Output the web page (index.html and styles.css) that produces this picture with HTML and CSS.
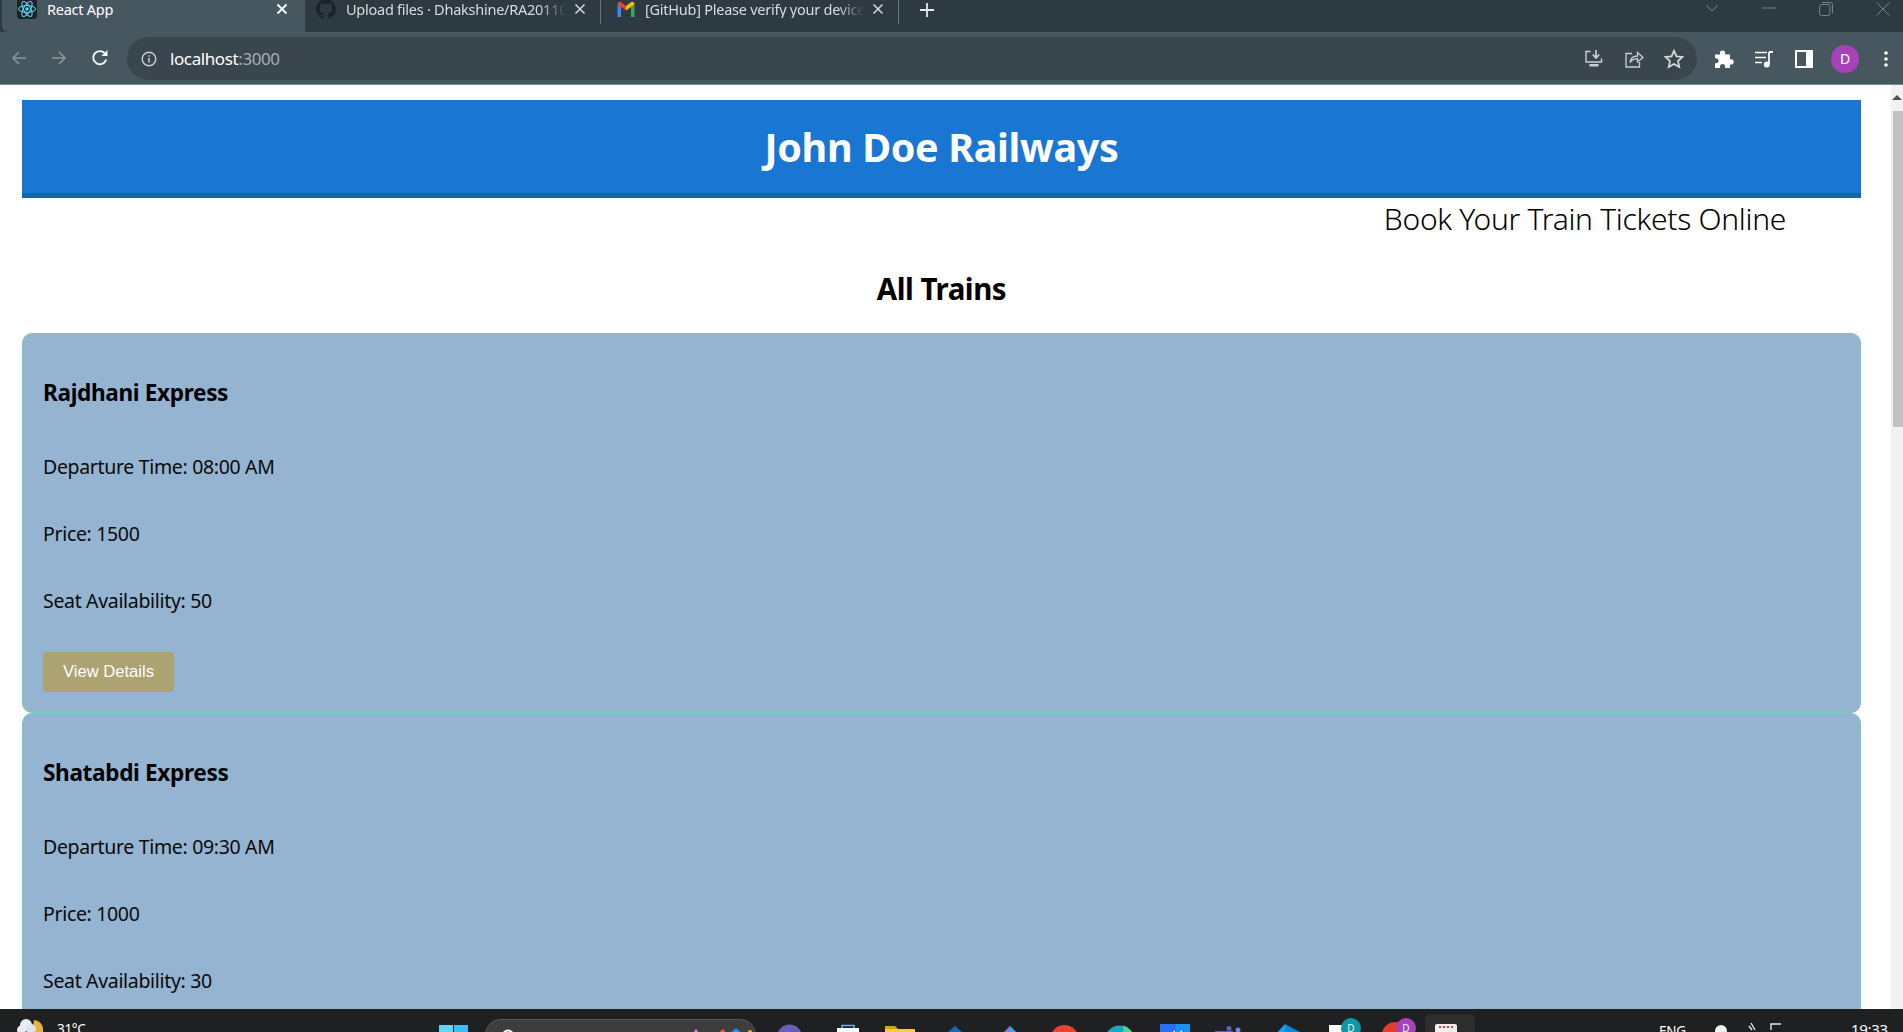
FILE: index.html
```html
<!DOCTYPE html>
<html lang="en">
<head>
<meta charset="utf-8">
<title>React App</title>
<link rel="stylesheet" href="styles.css">
</head>
<body>
<div class="shell">
  <div class="tabstrip">
    <div class="tab tab-active">
      <svg class="favicon" viewBox="0 0 20 20"><rect width="20" height="20" rx="3" fill="#20232a"/><g fill="none" stroke="#61dafb" stroke-width="1"><ellipse cx="10" cy="10" rx="8.5" ry="3.4"/><ellipse cx="10" cy="10" rx="8.5" ry="3.4" transform="rotate(60 10 10)"/><ellipse cx="10" cy="10" rx="8.5" ry="3.4" transform="rotate(120 10 10)"/></g><circle cx="10" cy="10" r="1.7" fill="#61dafb"/></svg>
      <span class="tab-title">React App</span>
      <svg class="tab-close" viewBox="0 0 12 12"><path d="M1.5 1.5l9 9M10.5 1.5l-9 9" stroke="#fff" stroke-width="1.8"/></svg>
    </div>
    <div class="tab tab-two">
      <svg class="favicon-gh" viewBox="0 0 16 16"><path fill="#1b2227" d="M8 0a8 8 0 0 0-2.5 15.6c.4.1.5-.2.5-.4v-1.4c-2.2.5-2.7-1-2.7-1-.4-.9-.9-1.200-.9-1.200-.7-.5.1-.5.1-.5.8.1 1.200.8 1.200.8.7 1.200 1.900.9 2.300.7.1-.5.3-.9.5-1.100-1.800-.2-3.600-.9-3.600-4 0-.9.3-1.600.8-2.100-.1-.2-.4-1 .1-2.100 0 0 .7-.2 2.200.8a7.600 7.600 0 0 1 4 0c1.500-1 2.200-.8 2.200-.8.4 1.100.2 1.900.1 2.100.5.6.8 1.300.8 2.100 0 3.100-1.900 3.700-3.700 3.900.3.300.6.800.6 1.500v2.200c0 .2.100.5.500.4A8 8 0 0 0 8 0z"/></svg>
      <span class="tab-title tab-title-dim">Upload files · Dhakshine/RA2011026010022</span>
      <svg class="tab-close" viewBox="0 0 12 12"><path d="M1.500 1.500l9 9M10.500 1.500l-9 9" stroke="#d5dadd" stroke-width="1.500"/></svg>
    </div>
    <div class="tab-sep"></div>
    <div class="tab tab-three">
      <svg class="favicon-gm" viewBox="0 0 20 16"><path d="M1.500 16V3.500L5 6v10z" fill="#4285f4"/><path d="M15 16V6l3.500-2.500V16z" fill="#34a853"/><path d="M1.500 3.500 C1.500 1 3.700 .2 5 1.200L10 5v4.500L1.500 3.500z" fill="#ea4335"/><path d="M10 5l5-3.800c1.600-1 3.500 0 3.500 2.300L15 6l-5 3.500z" fill="#fbbc04"/></svg>
      <span class="tab-title tab-title-dim">[GitHub] Please verify your device</span>
      <svg class="tab-close" viewBox="0 0 12 12"><path d="M1.500 1.500l9 9M10.500 1.500l-9 9" stroke="#d5dadd" stroke-width="1.500"/></svg>
    </div>
    <div class="tab-sep"></div>
    <svg class="new-tab" viewBox="0 0 14 14"><path d="M7 0v14M0 7h14" stroke="#e6e9eb" stroke-width="1.800"/></svg>
    <div class="window-controls">
      <svg class="win-chevron" viewBox="0 0 14 8"><path d="M1 1l6 6 6-6" fill="none" stroke="#77838a" stroke-width="1"/></svg>
      <svg class="win-min" viewBox="0 0 14 2"><path d="M0 1h14" stroke="#77838a" stroke-width="1"/></svg>
      <svg class="win-max" viewBox="0 0 14 14"><rect x=".5" y="2.500" width="10.500" height="11" rx="2" fill="none" stroke="#77838a"/><path d="M3 .5h8.500a2 2 0 0 1 2 2V11" fill="none" stroke="#77838a"/></svg>
      <svg class="win-close" viewBox="0 0 14 14"><path d="M.5.5l13 13M13.500.5l-13 13" stroke="#77838a" stroke-width="1"/></svg>
    </div>
  </div>

  <div class="toolbar">
    <svg class="nav-back" viewBox="0 0 16 16"><path d="M15 8H2M8 2L2 8l6 6" fill="none" stroke="#8a969c" stroke-width="1.600"/></svg>
    <svg class="nav-forward" viewBox="0 0 16 16"><path d="M1 8h13M8 2l6 6-6 6" fill="none" stroke="#8a969c" stroke-width="1.600"/></svg>
    <svg class="nav-reload" viewBox="0 0 18 18"><path d="M15.200 10.500A6.600 6.600 0 1 1 13.500 4" fill="none" stroke="#f4f6f7" stroke-width="1.900"/><path d="M16.500 1v6h-6z" fill="#f4f6f7"/></svg>
    <div class="omnibox">
      <svg class="omni-info" viewBox="0 0 16 16"><circle cx="8" cy="8" r="6.800" fill="none" stroke="#c9cfd2" stroke-width="1.400"/><path d="M8 7v4.500M8 4.200v1.500" stroke="#c9cfd2" stroke-width="1.500"/></svg>
      <span class="omni-url"><span class="omni-host">localhost</span>:3000</span>
      <div class="omni-actions">
        <svg class="omni-icon" viewBox="0 0 20 20"><path d="M6.500 2.500H2v10.500h15.500V9.500" fill="none" stroke="#c9cfd2" stroke-width="1.400"/><path d="M12 1v7M8.800 5.500L12 9l3.200-3.500" fill="none" stroke="#c9cfd2" stroke-width="1.700"/><path d="M5.500 15h9v2.500h-9z" fill="#c9cfd2"/></svg>
        <svg class="omni-icon" viewBox="0 0 20 20"><path d="M8 4.500H2V18h13.500v-5" fill="none" stroke="#c9cfd2" stroke-width="1.300"/><path d="M6 13.500c.5-4 3.500-6.500 7.500-6.500V3.500L19 8.500 13.500 13v-3.300c-3 0-5.500 1-7.500 3.800z" fill="none" stroke="#c9cfd2" stroke-width="1.300"/></svg>
        <svg class="omni-icon" viewBox="0 0 20 20"><path d="M10 1.800l2.500 5.600 6 .6-4.500 4.100 1.300 6L10 15l-5.300 3.100 1.300-6L1.500 8l6-.6z" fill="none" stroke="#d5dadd" stroke-width="1.700"/></svg>
      </div>
    </div>
    <div class="toolbar-actions">
      <svg class="tool-icon" viewBox="0 0 20 20"><path d="M1 5.500h5V4a2.600 2.600 0 0 1 5.200 0v1.500h4.800v4.700h1a2.700 2.700 0 0 1 0 5.400h-1V19H11v-1.600a2.500 2.500 0 0 0-5 0V19H1v-4.800h1.200a2.500 2.500 0 0 0 0-5H1z" fill="#fff"/></svg>
      <svg class="tool-icon" viewBox="0 0 20 20"><path d="M1 3.500h12M1 8.500h11M1 13.500h7" stroke="#fff" stroke-width="1.700"/><path d="M15 3v12" stroke="#fff" stroke-width="1.700"/><path d="M15 3h4" stroke="#fff" stroke-width="2"/><circle cx="12.800" cy="15.500" r="3" fill="#fff"/></svg>
      <svg class="tool-icon" viewBox="0 0 20 20"><path d="M1 1h18v18H1z" fill="#fff"/><path d="M3 3h9v14H3z" fill="#47575f"/></svg>
      <div class="avatar">D</div>
      <svg class="tool-menu" viewBox="0 0 4 16"><circle cx="2" cy="2" r="1.800" fill="#fff"/><circle cx="2" cy="8" r="1.800" fill="#fff"/><circle cx="2" cy="14" r="1.800" fill="#fff"/></svg>
    </div>
  </div>

  <div class="viewport">
    <main class="page">
      <header class="banner"><h1 class="banner-title">John Doe Railways</h1></header>
      <p class="tagline">Book Your Train Tickets Online</p>
      <h2 class="section-title">All Trains</h2>

      <article class="card">
        <h3 class="card-title">Rajdhani Express</h3>
        <p class="card-line">Departure Time: 08:00 AM</p>
        <p class="card-line">Price: 1500</p>
        <p class="card-line">Seat Availability: 50</p>
        <button class="card-button">View Details</button>
      </article>
      <article class="card">
        <h3 class="card-title">Shatabdi Express</h3>
        <p class="card-line">Departure Time: 09:30 AM</p>
        <p class="card-line">Price: 1000</p>
        <p class="card-line">Seat Availability: 30</p>
        <button class="card-button">View Details</button>
      </article>
    </main>
    <div class="scrollbar">
      <div class="scroll-arrow"></div>
      <div class="scroll-thumb"></div>
    </div>
  </div>

  <footer class="taskbar">
    <svg class="weather" viewBox="0 0 27 14"><path d="M17 1a9 9 0 0 1 9 9v5H15z" fill="#e8b23c"/><circle cx="9" cy="6" r="6" fill="#e8edf4"/><circle cx="14" cy="10" r="5" fill="#dde4ee"/><circle cx="4.500" cy="11" r="4.500" fill="#e8edf4"/></svg>
    <span class="temp">31°C</span>
    <svg class="task-icons" viewBox="0 0 1050 23">
      <rect x="0" y="16" width="14" height="8" fill="#5fd6f6"/><rect x="15" y="16" width="14" height="8" fill="#3fbdf0"/>
      <rect x="46.500" y="10.500" width="270" height="30" rx="15" fill="#3d3d3d" stroke="#585858"/>
      <circle cx="69" cy="27" r="5.500" fill="none" stroke="#fff" stroke-width="1.800"/>
      <path d="M257 20l2 3 3 1-3 1-2 4-2-4-3-1 3-1z" fill="#e78be8"/>
      <path d="M281 22l4-2 1 3-3 4z" fill="#e0574c"/>
      <path d="M291 24l6-5 6 5v6h-12z" fill="#2b7de0"/><path d="M294 25l3-3 3 3v5h-6z" fill="#bfe3ff"/>
      <circle cx="311" cy="23" r="2" fill="#f2b33a"/>
      <circle cx="350.500" cy="28" r="12.500" fill="#6a5fb8"/>
      <rect x="398" y="19" width="22" height="10" fill="#fff"/><path d="M403 19v-2.500h12V19" fill="none" stroke="#39c5ef" stroke-width="1.600"/>
      <path d="M446 17h10l3 3h17v10h-30z" fill="#d9a215"/><rect x="446" y="20" width="30" height="10" fill="#f8cb45"/>
      <path d="M501 30l15-13 15 13z" fill="#0f6cbd"/>
      <path d="M558 30l13-13 13 13z" fill="#8a79dc"/><path d="M571 17l13 13h-13z" fill="#3f9fe6"/>
      <circle cx="625.500" cy="30" r="14" fill="#e8432f"/><circle cx="625.500" cy="30" r="5" fill="#f2ece6"/><path d="M634 24l6 6h-6z" fill="#f2b33a"/>
      <circle cx="680.500" cy="31" r="14.500" fill="#1da5c9"/><path d="M684 16.500a14.500 14.500 0 0 1 11 12h-10z" fill="#4fd58f"/>
      <rect x="721" y="15" width="30" height="12" fill="#2a6ff2"/><rect x="737" y="15" width="14" height="12" fill="#1a92f0"/><path d="M733 27v-3l3-3v6zM740 27v-3l3-3v6z" fill="#fff"/>
      <rect x="776" y="22" width="18" height="10" fill="#5b5fc7"/><circle cx="799" cy="21" r="2.500" fill="#7b83eb"/><circle cx="790" cy="19.500" r="2.500" fill="#5b5fc7"/>
      <path d="M831 30l5-4 10 4zM846 15l15 8v8h-15z" fill="#0e86d4"/><path d="M846 15l-10 11 10 4z" fill="#1aa3ec"/>
      <rect x="890" y="16" width="14" height="12" fill="#fff"/>
      <circle cx="912" cy="19" r="10" fill="#0e97a5"/>
      <circle cx="956" cy="26" r="13" fill="#e43b2e"/><circle cx="967" cy="19" r="10" fill="#a742b8"/>
      <rect x="986" y="5" width="50" height="24" rx="5" fill="#2d2d2d"/>
      <rect x="996" y="15" width="22" height="12" rx="2" fill="#f1efed"/><path d="M1000 18h2M1004 18h2M1008 18h2M1012 18h2" stroke="#d9402f" stroke-width="2"/>
      <text class="avatar-text" x="912" y="23" text-anchor="middle">D</text>
      <text class="avatar-text" x="967" y="23" text-anchor="middle">D</text>
    </svg>
    <span class="lang">ENG</span>
    <svg class="tray" viewBox="0 0 72 10"><circle cx="6" cy="9" r="6" fill="#f1f1f1"/><path d="M34 4l3 4M36 1l4 7" stroke="#e6e6e6" stroke-width="1.400"/><path d="M56 8V2h10" fill="none" stroke="#e6e6e6" stroke-width="1.400"/></svg>
    <span class="clock">19:33</span>
  </footer>
</div>
</body>
</html>
```
FILE: styles.css
```css
* { box-sizing: border-box; }
html, body { margin: 0; height: 100%; overflow: hidden; }
body { font-family: "Noto Sans", "Open Sans", sans-serif; color: #000; background: #fff; }
.shell { display: flex; flex-direction: column; height: 1032px; }

/* tab strip */
.tabstrip { flex: none; height: 32px; background: #2e3a41; display: flex; align-items: flex-start; position: relative; }
.tab { display: flex; align-items: center; height: 18px; flex: none; }
.tab-active { width: 303px; height: 32px; background: #47575f; margin-left: 2px; padding: 0 0 14px 15px; border-radius: 0 0 0 6px; position: relative; }
.tab-two { width: 293px; margin-left: 2px; padding-left: 9px; }
.tab-three { width: 297px; padding-left: 15px; }
.favicon { width: 20px; height: 20px; flex: none; margin-right: 10px; }
.favicon-gh { width: 20px; height: 20px; flex: none; margin-right: 10px; }
.favicon-gm { width: 20px; height: 16px; flex: none; margin-right: 9px; }
.tab-title { font-size: 14.5px; line-height: 18px; color: #fff; white-space: nowrap; overflow: hidden; flex: 1; min-width: 0; letter-spacing: -.25px; }
.tab-title-dim { color: #d6dcdf; -webkit-mask-image: linear-gradient(90deg, #000 88%, transparent 100%); mask-image: linear-gradient(90deg, #000 88%, transparent 100%); }
.tab-close { width: 12px; height: 12px; flex: none; margin: 0 14px 0 8px; }
.tab-active .tab-close { margin: 0 17px 0 0; }
.tab-sep { width: 1px; height: 24px; background: #6a757b; flex: none; }
.new-tab { width: 14px; height: 14px; margin: 3px 0 0 21px; flex: none; }
.window-controls { margin-left: auto; display: flex; align-items: flex-start; height: 16px; padding-top: 2px; }
.win-chevron { width: 14px; height: 8px; margin: 2px 0 0; }
.win-min { width: 14px; height: 2px; margin: 5px 0 0 43px; }
.win-max { width: 14px; height: 14px; margin: 0 0 0 43px; }
.win-close { width: 14px; height: 14px; margin: 0 13px 0 43px; }

/* toolbar */
.toolbar { flex: none; height: 53px; background: #47575f; border-bottom: 1px solid #7d888e; display: flex; align-items: flex-start; padding-top: 5px; }
.nav-back, .nav-forward { width: 16px; height: 16px; flex: none; margin-top: 13px; }
.nav-back { margin-left: 11px; }
.nav-forward { margin-left: 24px; }
.nav-reload { width: 18px; height: 18px; flex: none; margin: 12px 0 0 24px; }
.omnibox { flex: none; width: 1570px; height: 43px; margin-left: 18px; background: #3a464e; border-radius: 22px; display: flex; align-items: center; padding-left: 14px; }
.omni-info { width: 16px; height: 16px; flex: none; margin-right: 13px; }
.omni-url { font-size: 17px; letter-spacing: -.4px; color: #a5afb4; white-space: nowrap; }
.omni-host { color: #fff; }
.omni-actions { margin-left: auto; display: flex; gap: 20px; padding-right: 13px; }
.omni-icon { width: 20px; height: 20px; flex: none; }
.toolbar-actions { margin-left: 17px; display: flex; align-items: center; height: 43px; flex: none; }
.tool-icon { width: 20px; height: 20px; flex: none; margin-right: 20px; }
.avatar { width: 28px; height: 28px; border-radius: 50%; background: #a742b8; color: #fff; font-size: 14px; display: flex; align-items: center; justify-content: center; flex: none; margin-left: -3px; }
.tool-menu { width: 4px; height: 16px; margin-left: 25px; flex: none; }

/* page */
.viewport { flex: 1; min-height: 0; display: flex; overflow: hidden; }
.page { flex: 1; min-width: 0; padding: 15px 30px 0 22px; overflow: hidden; }
.banner { height: 98px; background: #1976d2; border-bottom: 5px solid #1565b0; display: flex; align-items: center; justify-content: center; }
.banner-title { margin: 0; font-size: 39.5px; line-height: 50px; font-weight: 700; color: #fff; letter-spacing: -.35px; }
.tagline { margin: -1px 0 0; font-size: 30px; line-height: 44px; font-weight: 300; text-align: right; padding-right: 75px; letter-spacing: -.3px; }
.section-title { margin: 28px 0 24px; font-size: 29.500px; line-height: 40px; font-weight: 700; text-align: center; letter-spacing: -.5px; }
.card { background: #94b4d1; border: 1px solid #78c9c0; border-radius: 10px; padding: 43px 20px 19px; height: 380px; }
.card-title { margin: 0 0 4px; font-size: 22.6px; line-height: 32px; font-weight: 700; letter-spacing: -.35px; }
.card-line { margin: 0; padding-top: 40px; font-size: 19.500px; line-height: 27px; letter-spacing: -.33px; color: #0a0a0a; }
.card-button { display: block; margin-top: 38px; width: 131px; height: 40px; padding: 0 0 1px; border: 0; border-radius: 4px; background: #ada271; color: #fff; font-family: "Liberation Sans", Arial, sans-serif; font-size: 16.6px; }

.scrollbar { flex: none; width: 12px; background: #f1f1f1; display: flex; flex-direction: column; align-items: flex-end; }
.scroll-arrow { width: 0; height: 0; margin: 10px 1px 11px 0; border: 5px solid transparent; border-top: 0; border-bottom-color: #505050; }
.scroll-thumb { width: 10px; height: 316px; background: #c1c1c1; }

/* taskbar */
.taskbar { flex: none; height: 23px; background: #1f2021; color: #fff; display: flex; align-items: flex-start; overflow: hidden; }
.weather { width: 27px; height: 14px; flex: none; margin: 10px 0 0 17px; }
.temp { flex: none; font-size: 13.5px; line-height: 18px; margin: 11px 0 0 13px; width: 382px; letter-spacing: -.3px; }
.task-icons { width: 1050px; height: 23px; flex: none; }
.lang { flex: none; font-size: 13.500px; line-height: 18px; margin: 13px 0 0 170px; letter-spacing: -.2px; }
.tray { width: 72px; height: 10px; flex: none; margin: 13px 0 0 29px; }
.clock { flex: none; font-size: 15px; line-height: 18px; margin: 11px 0 0 64px; letter-spacing: -.3px; }
.avatar-text { font-family: "Noto Sans", sans-serif; font-size: 10px; fill: #e6f4f6; }
```
